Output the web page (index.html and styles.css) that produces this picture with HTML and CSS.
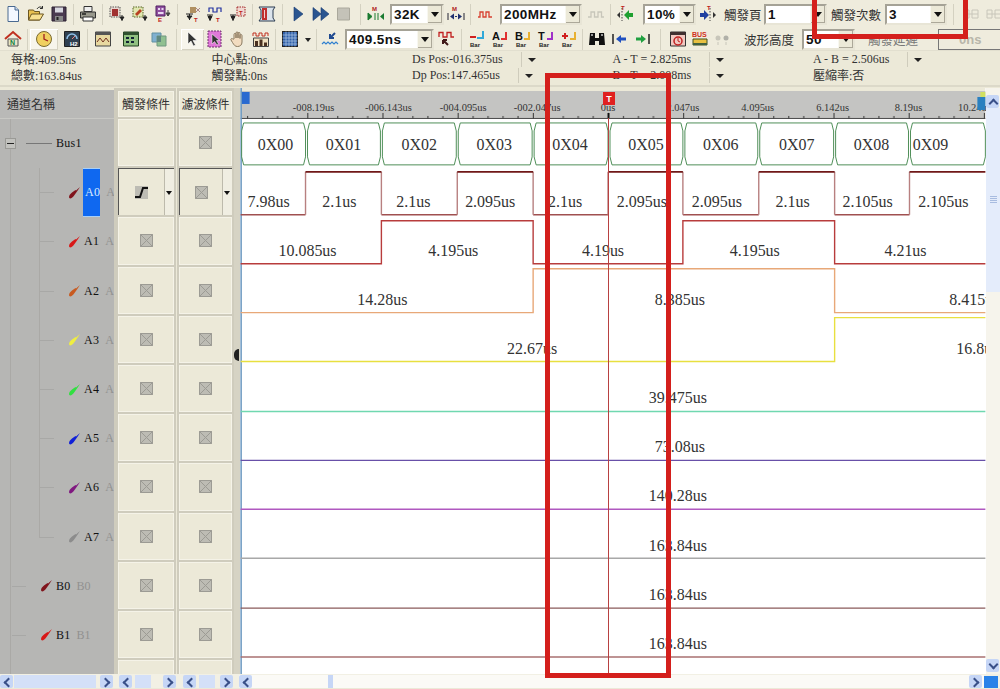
FILE: index.html
```html
<!DOCTYPE html>
<html lang="zh-Hant">
<head>
  <meta charset="UTF-8">
  <title>Logic Analyzer</title>
  <link rel="stylesheet" href="styles.css">
</head>
<body>

<!-- Icon set -->
<svg class="defs" width="0" height="0">
  <symbol id="i-new" viewBox="0 0 18 18"><path d="M4 1.500h7l3.500 3.500v11.500H4z" fill="#f4f8ff" stroke="#4a6a90"/><path d="M11 1.500V5h3.500" fill="#c8d8ee" stroke="#4a6a90"/></symbol>
  <symbol id="i-open" viewBox="0 0 18 18"><path d="M1.500 15V5h5l1 1.500h5V15z" fill="#e8c050" stroke="#6a5520"/><path d="M1.500 15l3-6h12l-3.500 6z" fill="#f8e090" stroke="#6a5520"/><path d="M10 4c1.500-2.500 4-2.500 5.500-1M15.500 1v2.500H13" fill="none" stroke="#2a2a2a"/></symbol>
  <symbol id="i-save" viewBox="0 0 18 18"><path d="M2 2h14v14H2z" fill="#4a3a50" stroke="#2a2030"/><path d="M5 2.500h8v5H5z" fill="#d8d8e0"/><path d="M5 11h8v5H5z" fill="#888"/><path d="M6.500 12h2v3h-2z" fill="#222"/></symbol>
  <symbol id="i-print" viewBox="0 0 18 18"><path d="M5 1.500h8v5H5z" fill="#eee" stroke="#333"/><path d="M1.500 7h15v6h-15z" fill="#98988c" stroke="#333"/><path d="M4 12h10v4H4z" fill="#fff" stroke="#333"/><path d="M3 9h4" stroke="#222" stroke-width="1.500"/></symbol>
  <symbol id="i-sel1" viewBox="0 0 18 18"><path d="M2 2h10v10H2z" fill="#e8d8d0" stroke="#555" stroke-dasharray="1.500 1"/><path d="M4 4h6v7H4z" fill="#a03030"/><path d="M14 10v6M12 12h4l-2 3z" stroke="#222" fill="#222"/></symbol>
  <symbol id="i-sel2" viewBox="0 0 18 18"><path d="M2 2h10v10H2z" fill="#e0e8b0" stroke="#556020" stroke-dasharray="1.500 1"/><path d="M4 9l5-5 2 2-5 5z" fill="#b84020"/><path d="M14 10v6M12 12h4l-2 3z" stroke="#222" fill="#222"/></symbol>
  <symbol id="i-chip" viewBox="0 0 18 18"><path d="M1 2h16l-2 3v8l2 3H1l2-3V5z" fill="#dce4ec" stroke="#2a3a50"/><path d="M4 3h5v12H4z" fill="#c03030"/><path d="M6 5h1v8H6z" fill="#f0d0d0"/></symbol>
  <symbol id="i-play" viewBox="0 0 18 18"><path d="M5 2l9 7-9 7z" fill="#2a5590" stroke="#1a3a70" stroke-width=".6"/></symbol>
  <symbol id="i-ff" viewBox="0 0 18 18"><path d="M1 2.500l8 6.500-8 6.500zM9 2.500l8 6.500-8 6.500z" fill="#2a5590" stroke="#1a3a70" stroke-width=".6"/></symbol>
  <symbol id="i-stop" viewBox="0 0 18 18"><path d="M2.500 3h12v12h-12z" fill="#c4c2b8" stroke="#aaa89c"/></symbol>
  <symbol id="i-pulse" viewBox="0 0 18 18"><path d="M2 12h2V7h3v5h3V7h3v5h3" fill="none" stroke="#d84030" stroke-width="1.300"/></symbol>
  <symbol id="i-pulse-off" viewBox="0 0 18 18"><path d="M1 12h3V7h3.500v5H11V7h3.500v5H17" fill="none" stroke="#c8c6ba" stroke-width="1.300"/></symbol>
  <symbol id="i-small" viewBox="0 0 18 18"><path d="M2 5h5v8H2zM10 5h6v8h-6z" fill="none" stroke="#c8c6ba"/><path d="M2 9h14" stroke="#c8c6ba"/></symbol>
  <symbol id="i-clock" viewBox="0 0 18 18"><circle cx="9" cy="9" r="7.500" fill="#f0d060" stroke="#7a6a30"/><path d="M9 4v5l4 2" fill="none" stroke="#a02020" stroke-width="1.300"/></symbol>
  <symbol id="i-win1" viewBox="0 0 18 18"><path d="M1.500 2h15v14h-15z" fill="#e8d8a0" stroke="#444"/><path d="M1.500 2h15v3h-15z" fill="#555"/><path d="M3 12l3-4 3 4 3-4 3 4" fill="none" stroke="#703020"/></symbol>
  <symbol id="i-win2" viewBox="0 0 18 18"><path d="M1.500 2h15v14h-15z" fill="#90c080" stroke="#224020"/><path d="M1.500 2h15v3h-15z" fill="#305030"/><path d="M4 7h3v2H4zM9 7h3v2H9zM4 11h3v2H4zM9 11h3v2H9z" fill="#123"/></symbol>
  <symbol id="i-win3" viewBox="0 0 18 18"><path d="M2 3h9v9H2z" fill="#80b0d0" stroke="#6090a0"/><path d="M7 6h9v10H7z" fill="#90c090" stroke="#709880"/><path d="M7 6h4v6H7z" fill="#608880"/></symbol>
  <symbol id="i-cursor" viewBox="0 0 18 18"><path d="M5 2v12l3-3 2.500 5 2-1-2.500-4.500h4z" fill="#333" stroke="#fff" stroke-width=".6"/></symbol>
  <symbol id="i-cursor2" viewBox="0 0 18 18"><path d="M2 1h13v16H2z" fill="#e078d8" stroke="#703070" stroke-dasharray="2 1"/><path d="M6 4v10l2.500-2.500L11 15l1.500-1-2-3.500h3z" fill="#333" stroke="#fff" stroke-width=".5"/></symbol>
  <symbol id="i-hand" viewBox="0 0 18 18"><path d="M5 9V4.500c0-1.500 2-1.500 2 0V8V3c0-1.500 2-1.500 2 0v5V3.500c0-1.500 2-1.500 2 0V8.500V5.500c0-1.300 2-1.300 2 0V12c0 3-2 4.500-4.500 4.500S5 15 3.500 12.500L2 10c-.7-1.300 1-2 2-.8z" fill="#f2dcc0" stroke="#8a7a60"/></symbol>
  <symbol id="i-bars" viewBox="0 0 18 18"><path d="M1 6V3h3v3h3V3h3v3h3V3h3v3" fill="none" stroke="#c03020"/><path d="M1.500 8h15v8.500h-15z" fill="#f0e0c0" stroke="#444"/><path d="M3 11h3v5H3zM7.500 9.500h3V16h-3zM12 12.500h3V16h-3z" fill="#4a3020"/></symbol>
  <symbol id="i-grid" viewBox="0 0 18 18"><rect x="1.500" y="1.500" width="15" height="15" fill="#3060a8" stroke="#222"/><path d="M1.500 5h15M1.500 8h15M1.500 11h15M1.500 14h15M5 1.500v15M8 1.500v15M11 1.500v15M14 1.500v15" stroke="#b0c8e8" stroke-width=".7"/></symbol>
  <symbol id="i-down" viewBox="0 0 18 18"><path d="M14 3L9 8M9 4v4h4" fill="none" stroke="#204a90" stroke-width="2"/><path d="M1 14l2-2 2 2 2-2 2 2 2-2 2 2 2-2 2 2" fill="none" stroke="#3080d0" stroke-width="1.200"/></symbol>
  <symbol id="i-zoomp" viewBox="0 0 18 18"><path d="M1 7V2.500h4V7h4V2.500h4V7h3" fill="none" stroke="#c02020" stroke-width="1.300"/><path d="M5 10l5 5M5 10v4M5 10h4" fill="none" stroke="#401818" stroke-width="2"/></symbol>
  <symbol id="i-bino" viewBox="0 0 18 18"><path d="M2 3h5v5h4V3h5l1 12h-6V11H7v4H1z" fill="#111"/><path d="M3 4h2v2H3zM13 4h2v2h-2z" fill="#999"/></symbol>
  <symbol id="i-prev" viewBox="0 0 18 18"><path d="M2 4v10" stroke="#222" stroke-width="1.500"/><path d="M5 9l5-4v2.500h5v3h-5V13z" fill="#2050c0"/></symbol>
  <symbol id="i-next" viewBox="0 0 18 18"><path d="M16 4v10" stroke="#222" stroke-width="1.500"/><path d="M13 9L8 5v2.500H3v3h5V13z" fill="#20a040"/></symbol>
  <symbol id="i-wave" viewBox="0 0 18 18"><path d="M1.500 2h15v14h-15z" fill="#f0c8c0" stroke="#333"/><path d="M1.500 2h15v3h-15z" fill="#403030"/><circle cx="9" cy="11" r="4" fill="none" stroke="#c02020" stroke-width="1.500"/><path d="M9 8v3l2 1" fill="none" stroke="#c02020"/></symbol>
  <symbol id="i-link" viewBox="0 0 18 18"><circle cx="5" cy="8" r="2.500" fill="#c8c6ba"/><circle cx="13" cy="8" r="2.500" fill="#b0b0a8"/><path d="M5 12v3M13 12v3" stroke="#c8c6ba"/></symbol>
  <symbol id="i-none" viewBox="0 0 13 13"><rect width="13" height="13" fill="#bdbcb4"/><path d="M.5.5h12v12H.5zM.5.5l12 12M12.500.5l-12 12" fill="none" stroke="#9c9b94"/></symbol>
  <symbol id="i-rise" viewBox="0 0 13 13"><rect width="13" height="13" fill="#bdbcb4"/><path d="M0 11h5l3-9h5" fill="none" stroke="#111" stroke-width="2"/></symbol>
  <symbol id="i-probe" viewBox="0 0 12 12"><path d="M0 10.500c0-2 1-3.500 3-5L6.500 3l1.500 1.500L5.500 8c-1.500 2-3 3.500-4.500 3.500zM7 3.500l4-3.500-3 4.500z"/></symbol>
</svg>

<!-- Toolbar row 1 -->
<div class="toolbar bar-top">
  <span class="tb"><svg class="ic"><use href="#i-new"/></svg></span>
  <span class="tb"><svg class="ic"><use href="#i-open"/></svg></span>
  <span class="tb"><svg class="ic"><use href="#i-save"/></svg></span>
  <span class="sep"></span>
  <span class="tb"><svg class="ic"><use href="#i-print"/></svg></span>
  <span class="sep"></span>
  <span class="tb"><svg class="ic"><use href="#i-sel1"/></svg></span>
  <span class="tb"><svg class="ic"><use href="#i-sel2"/></svg></span>
  <span class="tb"><svg class="ic" viewBox="0 0 18 18"><path d="M2 1h9v10H2z" fill="#9050a0" stroke="#502060"/><path d="M4 3h2v2H4zM7.500 3h2v2h-2zM4 7h5.500v2H4z" fill="#e8d8f0"/><text x="4" y="17" class="ic-t" fill="#c02020">E</text><path d="M14 5v6M12 8h4l-2 3z" stroke="#444" fill="#444"/></svg></span>
  <span class="sep"></span>
  <span class="tb"><svg class="ic" viewBox="0 0 18 18"><path d="M3 9h7M6.500 9v6M4 11h5l-2.500 3z" stroke="#222" fill="#222"/><path d="M7 2h6v6H7z" fill="#b09060"/><path d="M13 3l4 4M17 3l-4 4" stroke="#a88"/><text x="11" y="17" class="ic-t" fill="#c02020">T</text></svg></span>
  <span class="tb"><svg class="ic" viewBox="0 0 18 18"><path d="M3 7V3h4v4h4V3h4v4" fill="none" stroke="#2030a0" stroke-width="1.200"/><path d="M1 10h6M4 10v6M2 11.500h4L4 15z" stroke="#222" fill="#222"/><text x="10" y="17" class="ic-t" fill="#c02020">T</text></svg></span>
  <span class="tb"><svg class="ic" viewBox="0 0 18 18"><path d="M8 2h8v9H8z" fill="#f0d8d0" stroke="#a02020" stroke-dasharray="1.500 1"/><text x="10" y="10" class="ic-t" fill="#c02020">T</text><path d="M1 10h6M4 10v6M2 11.500h4L4 15z" stroke="#222" fill="#222"/></svg></span>
  <span class="sep"></span>
  <span class="tb"><svg class="ic"><use href="#i-chip"/></svg></span>
  <span class="sep sep-8"></span>
  <span class="tb"><svg class="ic"><use href="#i-play"/></svg></span>
  <span class="tb"><svg class="ic"><use href="#i-ff"/></svg></span>
  <span class="tb"><svg class="ic"><use href="#i-stop"/></svg></span>
  <span class="sep sep-9"></span>
  <span class="tb"><svg class="ic" viewBox="0 0 18 18"><text x="5" y="6" class="ic-t" fill="#b02020">M</text><path d="M1 8l4 3.500L1 15zM8 8v7M11 8v7" fill="#1a7a30" stroke="#1a7a30"/><path d="M17 8l-4 3.500 4 3.500z" fill="#1a7a30"/></svg></span>
  <span class="combo c-depth"><span class="combo-val">32K</span><span class="combo-btn"></span></span>
  <span class="tb"><svg class="ic" viewBox="0 0 18 18"><text x="5" y="6" class="ic-t" fill="#b02020">M</text><path d="M1 8v7M17 8v7" stroke="#223"/><path d="M3 11.500l4-3v6zM15 11.500l-4-3v6z" fill="#203070"/><path d="M8 11.500h2" stroke="#203070"/></svg></span>
  <span class="sep"></span>
  <span class="tb"><svg class="ic"><use href="#i-pulse"/></svg></span>
  <span class="combo c-freq"><span class="combo-val">200MHz</span><span class="combo-btn"></span></span>
  <span class="tb"><svg class="ic"><use href="#i-pulse-off"/></svg></span>
  <span class="sep"></span>
  <span class="tb"><svg class="ic" viewBox="0 0 18 18"><path d="M6 3v13" stroke="#444" stroke-dasharray="1.500 1.500"/><path d="M1 10l3-3v6z" fill="#333"/><path d="M8 10l5-5v3h4v4h-4v3z" fill="#20a030"/><text x="5" y="5" class="ic-t" fill="#c02020">T</text></svg></span>
  <span class="combo c-pct"><span class="combo-val">10%</span><span class="combo-btn"></span></span>
  <span class="tb"><svg class="ic" viewBox="0 0 18 18"><path d="M11 3v13" stroke="#444" stroke-dasharray="1.500 1.500"/><path d="M1 8h4V5l5 5-5 5v-3H1z" fill="#2040a0"/><path d="M17 10l-3-3v6z" fill="#333"/><text x="8" y="5" class="ic-t" fill="#c02020">T</text></svg></span>
  <span class="tb-label l-page">觸發頁</span>
  <span class="combo c-page"><span class="combo-val">1</span><span class="combo-btn"></span></span>
  <span class="tb-label l-count">觸發次數</span>
  <span class="combo c-count"><span class="combo-val">3</span><span class="combo-btn"></span></span>
  <span class="sep sep-12"></span>
  <span class="tb"><svg class="ic"><use href="#i-small"/></svg></span>
  <span class="tb"><svg class="ic"><use href="#i-small"/></svg></span>
</div>

<!-- Toolbar row 2 -->
<div class="toolbar bar-second">
  <span class="tb"><svg class="ic" viewBox="0 0 18 18"><path d="M1 9l8-7 8 7" fill="none" stroke="#c03020" stroke-width="2"/><path d="M4 9h10v7H4z" fill="#e8e4c8" stroke="#555"/><text x="6" y="15" class="ic-b" fill="#108040">N</text></svg></span>
  <span class="sep sep-5"></span>
  <span class="tb tb-wide tb-on"><svg class="ic"><use href="#i-clock"/></svg></span>
  <span class="tb tb-wide"><svg class="ic" viewBox="0 0 18 18"><path d="M1.500 1.500h15v15h-15z" fill="#304050" stroke="#222"/><path d="M4 9a5 5 0 0 1 10 0" fill="none" stroke="#90c0e8" stroke-width="1.500"/><path d="M9 9l3-3" stroke="#f08080"/><text x="7" y="16" class="ic-t" fill="#fff">H2</text></svg></span>
  <span class="sep sep-3"></span>
  <span class="tb tb-wide"><svg class="ic"><use href="#i-win1"/></svg></span>
  <span class="tb tb-wide"><svg class="ic"><use href="#i-win2"/></svg></span>
  <span class="tb tb-wide"><svg class="ic"><use href="#i-win3"/></svg></span>
  <span class="sep sep-8"></span>
  <span class="tb tb-on"><svg class="ic"><use href="#i-cursor"/></svg></span>
  <span class="tb"><svg class="ic"><use href="#i-cursor2"/></svg></span>
  <span class="tb"><svg class="ic"><use href="#i-hand"/></svg></span>
  <span class="tb"><svg class="ic"><use href="#i-bars"/></svg></span>
  <span class="sep sep-6"></span>
  <span class="tb"><svg class="ic"><use href="#i-grid"/></svg></span>
  <span class="tb-drop"></span>
  <span class="sep sep-5"></span>
  <span class="tb"><svg class="ic"><use href="#i-down"/></svg></span>
  <span class="combo c-time"><span class="combo-val">409.5ns</span><span class="combo-btn"></span></span>
  <span class="tb"><svg class="ic"><use href="#i-zoomp"/></svg></span>
  <span class="sep sep-7"></span>
  <span class="tb"><svg class="ic" viewBox="0 0 18 18"><path d="M2 7h6" stroke="#d02020" stroke-width="2"/><path d="M15 1v7h-6" fill="none" stroke="#30a8d8" stroke-width="2"/><text x="2" y="17" class="ic-t" fill="#222">Bar</text></svg></span>
  <span class="tb"><svg class="ic" viewBox="0 0 18 18"><text x="1" y="10" class="ic-l" fill="#111">A</text><path d="M15 2v7h-5" fill="none" stroke="#e03030" stroke-width="2"/><text x="2" y="17" class="ic-t" fill="#222">Bar</text></svg></span>
  <span class="tb"><svg class="ic" viewBox="0 0 18 18"><text x="1" y="10" class="ic-l" fill="#111">B</text><path d="M15 2v7h-5" fill="none" stroke="#e8b030" stroke-width="2"/><text x="2" y="17" class="ic-t" fill="#222">Bar</text></svg></span>
  <span class="tb"><svg class="ic" viewBox="0 0 18 18"><text x="1" y="10" class="ic-l" fill="#111">T</text><path d="M15 2v7h-5" fill="none" stroke="#a030c8" stroke-width="2"/><text x="2" y="17" class="ic-t" fill="#222">Bar</text></svg></span>
  <span class="tb"><svg class="ic" viewBox="0 0 18 18"><path d="M2 6h6M5 3v6" stroke="#d02020" stroke-width="2"/><path d="M15 2v7h-5" fill="none" stroke="#e8b030" stroke-width="2"/><text x="2" y="17" class="ic-t" fill="#222">Bar</text></svg></span>
  <span class="sep sep-5"></span>
  <span class="tb"><svg class="ic"><use href="#i-bino"/></svg></span>
  <span class="tb"><svg class="ic"><use href="#i-prev"/></svg></span>
  <span class="tb tb-narrow"><svg class="ic"><use href="#i-next"/></svg></span>
  <span class="sep sep-14"></span>
  <span class="tb tb-narrow"><svg class="ic"><use href="#i-wave"/></svg></span>
  <span class="tb tb-narrow"><svg class="ic" viewBox="0 0 18 18"><text x="1" y="7" class="ic-b" fill="#d03020">BUS</text><path d="M2 9h14v6H2z" fill="#e8c040" stroke="#405020"/><path d="M2 13h14v2H2z" fill="#406040"/></svg></span>
  <span class="tb tb-narrow"><svg class="ic"><use href="#i-link"/></svg></span>
  <span class="tb-label l-height">波形高度</span>
  <span class="combo c-height"><span class="combo-val">50</span><span class="combo-btn"></span></span>
  <span class="tb-label l-delay">觸發延遲</span>
  <span class="delay-box">0ns</span>
</div>

<!-- Readouts -->
<div class="info">
  <div class="info-col">
    <div class="info-line">每格:409.5ns</div>
    <div class="info-line">總數:163.84us</div>
  </div>
  <div class="info-col">
    <div class="info-line">中心點:0ns</div>
    <div class="info-line">觸發點:0ns</div>
  </div>
  <div class="info-col">
    <div class="info-line">Ds Pos:-016.375us<span class="info-arrow"></span></div>
    <div class="info-line">Dp Pos:147.465us<span class="info-arrow"></span></div>
  </div>
  <div class="info-col">
    <div class="info-line">A - T = 2.825ms<span class="info-arrow"></span></div>
    <div class="info-line">B - T = 2.008ms<span class="info-arrow"></span></div>
  </div>
  <div class="info-col">
    <div class="info-line">A - B = 2.506us<span class="info-arrow"></span></div>
    <div class="info-line">壓縮率:否</div>
  </div>
</div>

<div class="main">
  <!-- Channel names -->
  <div class="channels">
    <div class="head-channels">通道名稱</div>
    <div class="ch-row ch-bus"><span class="tree-btn"></span><span class="bus-line"></span><span class="ch-name">Bus1</span></div>
    <div class="ch-row ch-a"><svg class="probe p-a0"><use href="#i-probe"/></svg><span class="ch-name ch-sel">A0</span><span class="ch-alias">A0</span></div>
    <div class="ch-row ch-a"><svg class="probe p-a1"><use href="#i-probe"/></svg><span class="ch-name">A1</span><span class="ch-alias">A1</span></div>
    <div class="ch-row ch-a"><svg class="probe p-a2"><use href="#i-probe"/></svg><span class="ch-name">A2</span><span class="ch-alias">A2</span></div>
    <div class="ch-row ch-a"><svg class="probe p-a3"><use href="#i-probe"/></svg><span class="ch-name">A3</span><span class="ch-alias">A3</span></div>
    <div class="ch-row ch-a"><svg class="probe p-a4"><use href="#i-probe"/></svg><span class="ch-name">A4</span><span class="ch-alias">A4</span></div>
    <div class="ch-row ch-a"><svg class="probe p-a5"><use href="#i-probe"/></svg><span class="ch-name">A5</span><span class="ch-alias">A5</span></div>
    <div class="ch-row ch-a"><svg class="probe p-a6"><use href="#i-probe"/></svg><span class="ch-name">A6</span><span class="ch-alias">A6</span></div>
    <div class="ch-row ch-a"><svg class="probe p-a7"><use href="#i-probe"/></svg><span class="ch-name">A7</span><span class="ch-alias">A7</span></div>
    <div class="ch-row ch-b"><svg class="probe p-a0"><use href="#i-probe"/></svg><span class="ch-name">B0</span><span class="ch-alias">B0</span></div>
    <div class="ch-row ch-b"><svg class="probe p-a1"><use href="#i-probe"/></svg><span class="ch-name">B1</span><span class="ch-alias">B1</span></div>
  </div>

  <!-- Trigger conditions -->
  <div class="conds conds-trig">
    <div class="col-head">觸發條件</div>
    <div class="cond"></div>
    <div class="cond cond-sel"><span class="cond-main"><svg class="cond-ic"><use href="#i-rise"/></svg></span><span class="cond-arrow"></span></div>
    <div class="cond"><svg class="cond-ic"><use href="#i-none"/></svg></div>
    <div class="cond"><svg class="cond-ic"><use href="#i-none"/></svg></div>
    <div class="cond"><svg class="cond-ic"><use href="#i-none"/></svg></div>
    <div class="cond"><svg class="cond-ic"><use href="#i-none"/></svg></div>
    <div class="cond"><svg class="cond-ic"><use href="#i-none"/></svg></div>
    <div class="cond"><svg class="cond-ic"><use href="#i-none"/></svg></div>
    <div class="cond"><svg class="cond-ic"><use href="#i-none"/></svg></div>
    <div class="cond"><svg class="cond-ic"><use href="#i-none"/></svg></div>
    <div class="cond"><svg class="cond-ic"><use href="#i-none"/></svg></div>
    <div class="cond"></div>
  </div>

  <!-- Filter conditions -->
  <div class="conds conds-filter">
    <div class="col-head">濾波條件</div>
    <div class="cond"><svg class="cond-ic"><use href="#i-none"/></svg></div>
    <div class="cond cond-sel"><span class="cond-main"><svg class="cond-ic"><use href="#i-none"/></svg></span><span class="cond-arrow"></span></div>
    <div class="cond"><svg class="cond-ic"><use href="#i-none"/></svg></div>
    <div class="cond"><svg class="cond-ic"><use href="#i-none"/></svg></div>
    <div class="cond"><svg class="cond-ic"><use href="#i-none"/></svg></div>
    <div class="cond"><svg class="cond-ic"><use href="#i-none"/></svg></div>
    <div class="cond"><svg class="cond-ic"><use href="#i-none"/></svg></div>
    <div class="cond"><svg class="cond-ic"><use href="#i-none"/></svg></div>
    <div class="cond"><svg class="cond-ic"><use href="#i-none"/></svg></div>
    <div class="cond"><svg class="cond-ic"><use href="#i-none"/></svg></div>
    <div class="cond"><svg class="cond-ic"><use href="#i-none"/></svg></div>
    <div class="cond"></div>
  </div>

  <div class="splitter"><span class="splitter-grip"></span></div>

  <!-- Waveforms, drawn in page coordinates -->
  <svg class="wave" viewBox="240 88 746 588">
    <defs>
      <pattern id="ticks" x="231.500" y="110" width="75.300" height="12" patternUnits="userSpaceOnUse">
        <path d="M.5 3v6M15.500 6v3M30.500 6v3M45.500 6v3M60.500 6v3" stroke="#333"/>
      </pattern>
    </defs>
    <rect x="240" y="88" width="746" height="3" fill="#ece9d8"/>
    <rect x="240" y="91" width="746" height="27" fill="#c4c4c2"/>
    <rect x="240" y="110" width="746" height="9" fill="url(#ticks)"/>
    <path d="M240 118.500h746" stroke="#444"/>
    <g class="ruler">
      <text x="313" y="111">-008.19us</text>
      <text x="388" y="111">-006.143us</text>
      <text x="463" y="111">-004.095us</text>
      <text x="537" y="111">-002.047us</text>
      <text x="608" y="111">0us</text>
      <text x="683" y="111">2.047us</text>
      <text x="758" y="111">4.095us</text>
      <text x="833" y="111">6.142us</text>
      <text x="909" y="111">8.19us</text>
      <text x="975" y="111">10.24us</text>
    </g>
    <rect x="241" y="92" width="8" height="12" fill="#2a6ad0"/>
    <rect x="603" y="92" width="12" height="13" fill="#e02020"/>
    <text x="609" y="102" class="t-mark">T</text>
    <rect x="978" y="97" width="8" height="13" fill="#2a80c0"/>
    <rect x="981" y="92" width="5" height="5" fill="#d0e060"/>

    <path d="M240.500 88v588" stroke="#6a98c0" stroke-width="1.500"/>

    <!-- Bus -->
    <g class="bus">
      <path d="M243 123h60l2 8v26l-2 8h-60l-2-8v-26z"/>
      <path d="M309 123h69l2 8v26l-2 8h-69l-2-8v-26z"/>
      <path d="M384 123h70l2 8v26l-2 8h-70l-2-8v-26z"/>
      <path d="M460 123h70l2 8v26l-2 8h-70l-2-8v-26z"/>
      <path d="M536 123h70l2 8v26l-2 8h-70l-2-8v-26z"/>
      <path d="M612 123h69l2 8v26l-2 8h-69l-2-8v-26z"/>
      <path d="M687 123h69l2 8v26l-2 8h-69l-2-8v-26z"/>
      <path d="M762 123h70l2 8v26l-2 8h-70l-2-8v-26z"/>
      <path d="M838 123h69l2 8v26l-2 8h-69l-2-8v-26z"/>
      <path d="M913 123h71l2 8v26l-2 8h-71l-2-8v-26z"/>
    </g>
    <g class="lbl">
      <text x="275" y="150">0X00</text>
      <text x="343" y="150">0X01</text>
      <text x="419" y="150">0X02</text>
      <text x="494" y="150">0X03</text>
      <text x="570" y="150">0X04</text>
      <text x="646" y="150">0X05</text>
      <text x="721" y="150">0X06</text>
      <text x="797" y="150">0X07</text>
      <text x="872" y="150">0X08</text>
      <text x="931" y="150">0X09</text>
    </g>

    <!-- A0 -->
    <path class="sig s-a0-low" d="M240 215h65M381 215h76M533 215h75M683 215h76M835 215h75"/>
    <path class="sig s-a0-edge" d="M305 215v-43M381 172v43M457 215v-43M533 172v43M608 215v-43M683 172v43M759 215v-43M835 172v43M910 215v-43"/>
    <path class="sig s-a0-high" d="M305 172h76M457 172h76M608 172h75M759 172h76M910 172h76"/>
    <g class="lbl">
      <text x="268" y="207">7.98us</text>
      <text x="339" y="207">2.1us</text>
      <text x="413" y="207">2.1us</text>
      <text x="490" y="207">2.095us</text>
      <text x="565" y="207">2.1us</text>
      <text x="642" y="207">2.095us</text>
      <text x="717" y="207">2.095us</text>
      <text x="793" y="207">2.1us</text>
      <text x="868" y="207">2.105us</text>
      <text x="944" y="207">2.105us</text>
    </g>

    <!-- A1 -->
    <path class="sig s-a1" d="M240 264h141v-43h152v43h150v-43h152v43h151"/>
    <g class="lbl">
      <text x="307" y="256">10.085us</text>
      <text x="453" y="256">4.195us</text>
      <text x="603" y="256">4.19us</text>
      <text x="755" y="256">4.195us</text>
      <text x="906" y="256">4.21us</text>
    </g>

    <!-- A2 -->
    <path class="sig s-a2" d="M240 313h293v-44h302v44h151"/>
    <g class="lbl">
      <text x="382" y="305">14.28us</text>
      <text x="680" y="305">8.385us</text>
      <text x="975" y="305">8.415us</text>
    </g>

    <!-- A3 -->
    <path class="sig s-a3" d="M240 362h595v-44h151"/>
    <g class="lbl">
      <text x="532" y="354">22.67us</text>
      <text x="978" y="354">16.8us</text>
    </g>

    <path class="sig s-a4" d="M240 412h746"/>
    <path class="sig s-a5" d="M240 461h746"/>
    <path class="sig s-a6" d="M240 510h746"/>
    <path class="sig s-a7" d="M240 559h746"/>
    <path class="sig s-b0" d="M240 609h746"/>
    <path class="sig s-b1" d="M240 658h746"/>
    <g class="lbl">
      <text x="678" y="404">39.475us</text>
      <text x="680" y="453">73.08us</text>
      <text x="678" y="502">140.28us</text>
      <text x="678" y="552">163.84us</text>
      <text x="678" y="601">163.84us</text>
      <text x="678" y="650">163.84us</text>
    </g>

    <!-- Trigger cursor -->
    <path d="M608.500 118v558" stroke="#b84040"/>
    <path d="M608.500 113v5" stroke="#111" stroke-width="2"/>
  </svg>

  <!-- Vertical scrollbar -->
  <div class="vscroll">
    <span class="sb-btn sb-up"></span>
    <span class="vthumb"><span class="vgrip"></span></span>
    <span class="sb-btn sb-down"></span>
  </div>
</div>

<!-- Horizontal scrollbars -->
<div class="hbars">
  <div class="hbar hb-channels"><span class="sb-btn sb-left"></span><span class="hthumb hthumb-long"></span><span class="sb-btn sb-right"></span></div>
  <div class="hbar hb-trig"><span class="sb-btn sb-left"></span><span class="hthumb"></span><span class="sb-btn sb-right"></span></div>
  <div class="hbar hb-filter"><span class="sb-btn sb-left"></span><span class="hthumb"></span><span class="sb-btn sb-right"></span></div>
  <div class="hbar hb-wave"><span class="sb-btn sb-left"></span><span class="wave-thumb"></span><span class="sb-btn sb-right"></span></div>
  <div class="hb-corner"></div>
</div>

<!-- Red annotation boxes from the original screenshot -->
<div class="mark mark-cursor"></div>
<div class="mark mark-count"></div>

</body>
</html>
```

FILE: styles.css
```css
/* Global */
* {
  box-sizing: border-box;
}

html, body {
  margin: 0;
  height: 100%;
}

body {
  width: 1000px;
  height: 689px;
  overflow: hidden;
  position: relative;
  background-color: #ece9d8;
  color: #222;
  font-family: "Liberation Serif", "Noto Sans CJK TC", serif;
  font-size: 12px;
}

.defs {
  position: absolute;
}

.ic-t {
  font: bold 6px "Liberation Sans", sans-serif;
}

.ic-b {
  font: bold 7px "Liberation Sans", sans-serif;
}

.ic-l {
  font: bold 11px "Liberation Sans", sans-serif;
}

/* Toolbars */
.toolbar {
  display: flex;
  align-items: center;
  overflow: hidden;
  padding-left: 1.5px;
  background-color: #efecdd;
}

.bar-top {
  height: 28px;
}

.bar-second {
  height: 23px;
  border-bottom: 1px solid #e2dfcf;
}

.tb {
  flex: none;
  width: 23px;
  height: 21px;
  display: flex;
  align-items: center;
  justify-content: center;
}

.tb-wide {
  width: 28px;
}

.tb-narrow {
  width: 22px;
}

.tb-on {
  background-color: #f7f5ec;
  box-shadow: inset 1px 1px 0 #fff, inset -1px -1px 0 #d5d2c2;
}

.ic {
  width: 18px;
  height: 18px;
}

.sep {
  flex: none;
  width: 6px;
  height: 21px;
  background: linear-gradient(#d4d1c1, #d4d1c1) center / 1px 100% no-repeat;
}

.sep-3 { width: 3px; }
.sep-5 { width: 5px; }
.sep-6 { width: 6px; }
.sep-7 { width: 7px; }
.sep-8 { width: 8px; }
.sep-9 { width: 9px; }
.sep-12 { width: 12px; }
.sep-14 { width: 14px; }

.tb-drop {
  flex: none;
  width: 12px;
  height: 20px;
  position: relative;
}

.tb-drop::after {
  content: "";
  position: absolute;
  left: 3px;
  top: 9px;
  border: 3px solid transparent;
  border-top: 4px solid #222;
  border-bottom: 0;
}

.tb-label {
  flex: none;
  font-size: 12.5px;
  color: #333;
  white-space: nowrap;
}

.l-page { margin-left: 5px; width: 36px; }
.l-count { margin-left: 4px; width: 51px; }
.l-height { margin-left: 11px; width: 50px; }
.l-delay { margin-left: 13px; width: 51px; color: #777; }

/* Combo boxes */
.combo {
  flex: none;
  height: 21px;
  display: flex;
  background-color: #fff;
  border: 2px solid;
  border-color: #a5a296 #e8e5d6 #e8e5d6 #a5a296;
}

.combo-val {
  flex: 1;
  padding-left: 2px;
  font: bold 13.500px/17px "Liberation Sans", sans-serif;
  letter-spacing: 0.4px;
  color: #111;
}

.combo-btn {
  flex: none;
  width: 15px;
  background: #ece9d8;
  border-left: 1px solid #f8f7f0;
  box-shadow: inset -1px -1px 0 #aca899;
  position: relative;
}

.combo-btn::after {
  content: "";
  position: absolute;
  left: 3px;
  top: 6px;
  border: 4px solid transparent;
  border-top: 5px solid #111;
  border-bottom: 0;
}

.c-depth { width: 54px; margin-left: 2.5px; }
.c-freq { width: 82px; margin-left: 4px; margin-right: 2.5px; }
.c-pct { width: 53px; margin-left: 6.5px; }
.c-page { width: 63px; margin-left: 4px; }
.c-count { width: 62px; margin-left: 3px; }
.c-time { width: 89px; margin-left: 3.500px; margin-right: 1px; }
.c-height { width: 53px; margin-left: 8px; }

.delay-box {
  flex: none;
  width: 64px;
  height: 21px;
  margin-left: 19px;
  border: 1px solid #777;
  border-right: 0;
  color: #b8b6aa;
  font: bold 13px/19px "Liberation Sans", sans-serif;
  padding-left: 20px;
}

/* Readouts */
.info {
  height: 36px;
  padding: 0 0 0 11px;
  display: grid;
  grid-template-columns: repeat(5, 200.500px);
  border-bottom: 2px solid #dcd9c9;
}

.info-col {
  display: flex;
  flex-direction: column;
}

.info-line {
  height: 16px;
  display: flex;
  align-items: center;
  white-space: nowrap;
  color: #333;
}

.info-arrow {
  width: 15px;
  height: 15px;
  margin-left: 18px;
  position: relative;
  border-left: 1px solid #cfccbc;
}

.info-arrow::after {
  content: "";
  position: absolute;
  left: 6px;
  top: 6px;
  border: 4px solid transparent;
  border-top: 4px solid #222;
  border-bottom: 0;
}

/* Main area */
.main {
  height: 587px;
  display: flex;
  overflow: hidden;
  padding-top: 1px;
}

.col-head {
  flex: none;
  display: flex;
  align-items: center;
  justify-content: center;
  font-size: 12px;
  color: #333;
}

/* Channel list */
.channels {
  flex: none;
  width: 114px;
  background-color: #b6b6b4;
  background-image: linear-gradient(#aaa9a6, #aaa9a6), linear-gradient(#aaa9a6, #aaa9a6);
  background-size: 1px 100%, 1px 370px;
  background-position: 10px 0, 39px 80px;
  background-repeat: no-repeat;
  overflow: hidden;
}

.head-channels {
  height: 31px;
  display: flex;
  align-items: center;
  padding-left: 7px;
  color: #333;
  background-color: #b9b9b7;
  border-top: 2px solid #ece9d8;
  border-bottom: 1px solid #c8c8c4;
}

.ch-row {
  height: 49.200px;
  display: flex;
  align-items: center;
  white-space: nowrap;
  font-size: 12px;
}

.ch-bus { padding-left: 5px; }

.ch-a {
  padding-left: 69px;
  background: linear-gradient(#a8a8a6, #a8a8a6) 40px 50% / 14px 1px no-repeat;
}

.ch-b {
  padding-left: 41px;
  background: linear-gradient(#a8a8a6, #a8a8a6) 12px 50% / 14px 1px no-repeat;
}

.tree-btn {
  flex: none;
  width: 11px;
  height: 11px;
  border: 1px solid #9a9a96;
  background: linear-gradient(#222, #222) center / 7px 1px no-repeat #c2c2be;
}

.bus-line {
  flex: none;
  width: 26px;
  height: 1px;
  margin: 0 4px 0 10px;
  background-color: #777;
}

.probe {
  flex: none;
  width: 12px;
  height: 12px;
  margin-right: 3px;
}

.p-a0 { fill: #80141c; }
.p-a1 { fill: #d81818; }
.p-a2 { fill: #c85a20; }
.p-a3 { fill: #f0ee40; }
.p-a4 { fill: #30e040; }
.p-a5 { fill: #1020d8; }
.p-a6 { fill: #801880; }
.p-a7 { fill: #8c8c8c; }

.ch-name {
  color: #111;
  letter-spacing: 0.3px;
}

.ch-alias {
  margin-left: 6px;
  color: #919190;
}

.ch-sel {
  align-self: stretch;
  display: flex;
  align-items: center;
  width: 18px;
  margin: 0 0 0 -1px;
  padding-left: 2px;
  color: #dcecff;
  background-color: #0f68f0;
  border: 1px solid #a8d0f8;
  border-width: 1px 0;
}

/* Condition columns */
.conds {
  flex: none;
  display: flex;
  flex-direction: column;
  overflow: hidden;
}

.conds-trig {
  width: 62px;
  padding: 0 2px 0 4px;
  margin-right: 1px;
  background-color: #cfccbd;
}

.conds-filter {
  width: 57px;
  padding: 0 2px;
  background-color: #cfccbd;
}

.conds .col-head {
  height: 26px;
  margin-top: 3px;
  background-color: #ece9d8;
  border: 1px solid #f4f2e6;
}

.cond {
  flex: none;
  height: 47.200px;
  margin-top: 2px;
  background-color: #ece9d8;
  border: 1px solid #f5f3e8;
  display: flex;
  align-items: center;
  justify-content: center;
}

.cond-ic {
  width: 13px;
  height: 13px;
}

.cond-sel {
  justify-content: flex-start;
  border: 0;
  border-top: 1px solid #555;
  border-left: 1px solid #555;
  background-color: #f0eee2;
}

.cond-main {
  flex: 1;
  height: 100%;
  display: flex;
  align-items: center;
  justify-content: center;
  background-color: #ece9d8;
  border-right: 1px solid #bdbaac;
}

.cond-arrow {
  flex: none;
  width: 9px;
  position: relative;
  height: 100%;
}

.cond-arrow::after {
  content: "";
  position: absolute;
  left: 1px;
  top: 22px;
  border: 3px solid transparent;
  border-top: 4px solid #111;
  border-bottom: 0;
}

.splitter {
  flex: none;
  width: 6px;
  background-color: #d6d3c4;
  position: relative;
}

.splitter-grip {
  position: absolute;
  left: 0;
  top: 261px;
  width: 5px;
  height: 12px;
  background: #222;
  border-radius: 6px 0 0 6px;
}

/* Waveform */
.wave {
  flex: none;
  width: 746px;
  height: 587px;
  background-color: #fff;
}

.ruler text {
  font: 10.500px "Liberation Serif", serif;
  fill: #333;
  text-anchor: middle;
}

.t-mark {
  font: bold 9px "Liberation Sans", sans-serif;
  fill: #fff;
  text-anchor: middle;
}

.bus path {
  fill: none;
  stroke: #4f8f58;
  stroke-width: 1;
}

.lbl text {
  font: 16px "Liberation Serif", serif;
  fill: #333;
  text-anchor: middle;
}

.sig {
  fill: none;
  stroke-width: 1.400;
}

.s-a0-low { stroke: #a05050; }
.s-a0-edge { stroke: #b88080; }
.s-a0-high { stroke: #701818; stroke-width: 1.800; }
.s-a1 { stroke: #b83c3c; }
.s-a2 { stroke: #e8a878; }
.s-a3 { stroke: #e8e040; }
.s-a4 { stroke: #70d8b0; }
.s-a5 { stroke: #6850a8; }
.s-a6 { stroke: #b058c0; }
.s-a7 { stroke: #a8a8a8; }
.s-b0 { stroke: #8a5a5a; }
.s-b1 { stroke: #a87070; }

/* Scrollbars */
.vscroll {
  flex: none;
  width: 14px;
  padding-top: 7px;
  display: flex;
  flex-direction: column;
  background-color: #f6f4ec;
}

.sb-btn {
  flex: none;
  display: block;
  width: 13px;
  height: 13px;
  border-radius: 2px;
  background-color: #c6d6f6;
  position: relative;
}

.sb-btn::after {
  content: "";
  position: absolute;
  width: 5px;
  height: 5px;
  border: solid #3a5088;
  border-width: 2px 0 0 2px;
}

.sb-up::after { left: 4px; top: 5px; transform: rotate(45deg); }
.sb-down::after { left: 4px; top: 2px; transform: rotate(225deg); }
.sb-left::after { left: 5px; top: 4px; transform: rotate(-45deg); }
.sb-right::after { left: 2px; top: 4px; transform: rotate(135deg); }

.vthumb {
  flex: none;
  height: 184px;
  background-color: #e4ecfb;
  display: flex;
  align-items: center;
  justify-content: center;
}

.vgrip {
  width: 7px;
  height: 8px;
  background: repeating-linear-gradient(#a8bce0 0 1px, transparent 1px 2px);
}

.sb-down {
  margin-top: auto;
  margin-bottom: 2px;
}

.hbars {
  height: 14px;
  display: flex;
  background-color: #f2f0e4;
}

.hbar {
  flex: none;
  height: 13px;
  margin-top: 1px;
  display: flex;
  justify-content: space-between;
}

.hb-channels { width: 113px; }
.hb-trig { width: 57px; margin-left: 6px; }
.hb-filter { width: 50px; margin-left: 7px; }
.hb-wave { width: 745px; margin-left: 6px; padding-right: 2px; background-color: #fbfaf6; }

.hthumb {
  flex: none;
  width: 16px;
  margin-right: auto;
  margin-left: 3px;
  background-color: #d4e0f8;
}

.hthumb-long {
  width: 82px;
  margin-left: 1px;
}

.wave-thumb {
  flex: none;
  width: 5px;
  margin-left: 76px;
  margin-right: auto;
  background-color: #c6d6f6;
}

.hb-corner {
  flex: none;
  width: 14px;
  height: 12px;
  margin-top: 2px;
  background: #2a82e8;
}

/* Red annotation boxes */
.mark {
  position: absolute;
  border: 5px solid #d41f1c;
}

.mark-cursor {
  left: 545px;
  top: 73px;
  width: 126px;
  height: 605px;
}

.mark-count {
  left: 812px;
  top: -6px;
  width: 156px;
  height: 45px;
}
```
